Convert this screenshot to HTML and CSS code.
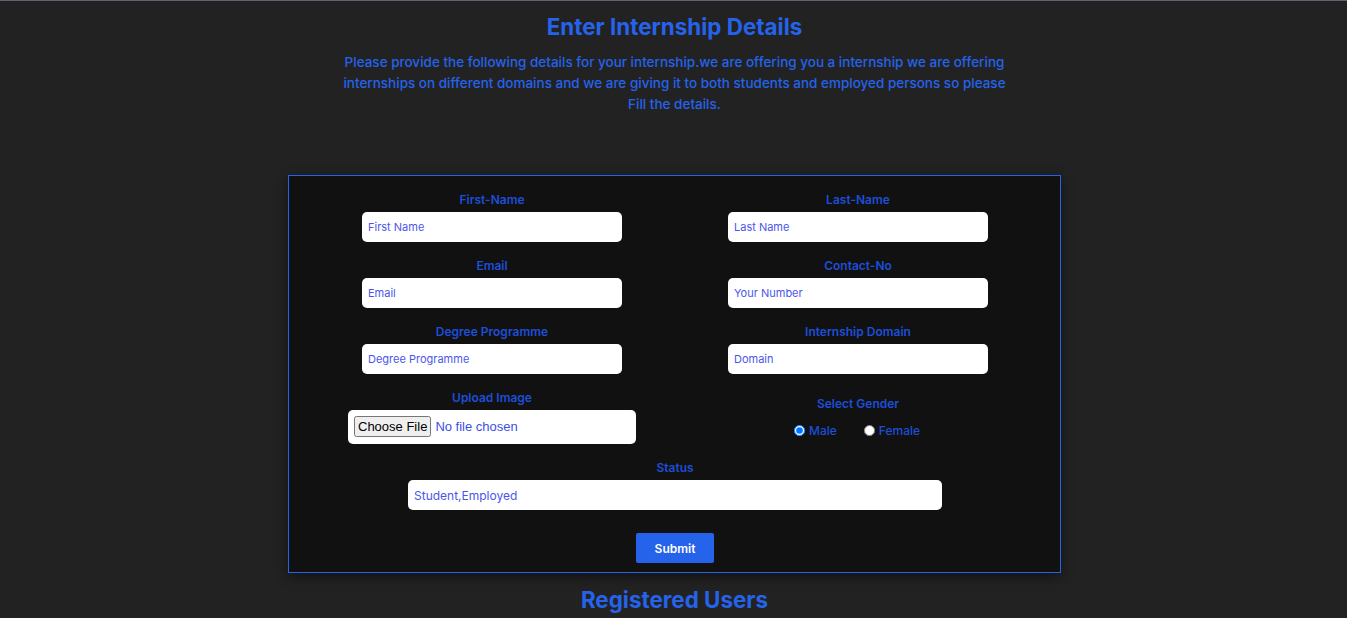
FILE: index.html
```html
<!DOCTYPE html>
<html lang="en">
<head>
<meta charset="utf-8">
<title>Internship Details</title>
<link rel="stylesheet" href="styles.css">
</head>
<body>
<div class="page">
  <header class="intro">
    <h1 class="title">Enter Internship Details</h1>
    <p class="lead">Please provide the following details for your internship.we are offering you a internship we are offering internships on different domains and we are giving it to both students and employed persons so please Fill the details.</p>
  </header>

  <form class="card">
    <div class="grid">
      <div class="field">
        <label class="label">First-Name</label>
        <input class="text" type="text" placeholder="First Name">
      </div>
      <div class="field">
        <label class="label">Last-Name</label>
        <input class="text" type="text" placeholder="Last Name">
      </div>
      <div class="field">
        <label class="label">Email</label>
        <input class="text" type="text" placeholder="Email">
      </div>
      <div class="field">
        <label class="label">Contact-No</label>
        <input class="text" type="text" placeholder="Your Number">
      </div>
      <div class="field">
        <label class="label">Degree Programme</label>
        <input class="text" type="text" placeholder="Degree Programme">
      </div>
      <div class="field">
        <label class="label">Internship Domain</label>
        <input class="text" type="text" placeholder="Domain">
      </div>
      <div class="field">
        <label class="label">Upload Image</label>
        <input class="file" type="file">
      </div>
      <div class="field">
        <label class="label gender-label">Select Gender</label>
        <div class="radios">
          <label class="radio"><input type="radio" name="g" checked> Male</label>
          <label class="radio"><input type="radio" name="g"> Female</label>
        </div>
      </div>
      <div class="field span">
        <label class="label">Status</label>
        <input class="text wide" type="text" placeholder="Student,Employed">
      </div>
      <div class="actions span">
        <button class="submit" type="button">Submit</button>
      </div>
    </div>
  </form>

  <h2 class="subtitle">Registered Users</h2>
</div>
</body>
</html>
```

FILE: styles.css
```css
* { box-sizing: border-box; }
html, body {
  margin: 0;
  padding: 0;
  background: #222222;
  font-family: Inter, "Noto Sans", sans-serif;
  color: #2563eb;
}
body {
  border-top: 1px solid #5c6370;
  min-height: 618px;
}
.page {
  display: flex;
  flex-direction: column;
  align-items: center;
  padding-left: 2px;
}
.intro {
  text-align: center;
  padding-top: 10px;
}
.title {
  margin: 0;
  font-size: 22.4px;
  line-height: 32px;
  font-weight: 700;
  color: #2563eb;
}
.lead {
  margin: 9px auto 0;
  width: 672px;
  font-size: 13.5px;
  line-height: 21px;
  font-weight: 500;
  color: #2563eb;
}
.card {
  margin-top: 60px;
  width: 773px;
  background: #111111;
  border: 1px solid #2563eb;
  box-shadow: 0 4px 12px rgba(0,0,0,0.45);
  padding: 14px 0 9px;
}
.grid {
  display: grid;
  grid-template-columns: 366px 366px;
  column-gap: 0;
  row-gap: 14px;
  padding-left: 20px;
  align-items: center;
}
.span { grid-column: 1 / span 2; }
.field {
  display: flex;
  flex-direction: column;
  align-items: center;
}
.label {
  font-size: 12px;
  line-height: 20px;
  font-weight: 600;
  color: #1d4ed8;
  margin-bottom: 2px;
}
.text {
  width: 260px;
  height: 30px;
  border: none;
  border-radius: 5px;
  background: #ffffff;
  padding: 0 6px;
  font-family: Inter, "Noto Sans", sans-serif;
  font-size: 11px;
  color: #3b4fe6;
  outline: none;
}
.text::placeholder { color: #4a56ea; opacity: 1; }
.file {
  width: 288px;
  height: 34px;
  background: #ffffff;
  border-radius: 5px;
  padding: 6px 6px;
  font-family: "Liberation Sans", Arial, sans-serif;
  font-size: 13px;
  color: #3b4fe6;
}
.file::file-selector-button {
  font-family: "Liberation Sans", Arial, sans-serif;
  font-size: 13px;
  padding: 1px 2px;
  margin-right: 4px;
  height: 21px;
}
.gender-label { margin-bottom: 8px; }
.radios {
  display: flex;
  gap: 27px;
  height: 17px;
  margin-left: -2px;
}
.radio {
  display: flex;
  align-items: center;
  gap: 4px;
  font-size: 12px;
  line-height: 17px;
  font-weight: 500;
  color: #1d4ed8;
}
.radio input {
  margin: 0;
  width: 11px;
  height: 11px;
}
.wide { width: 534px; font-size: 12px; }
.actions {
  display: flex;
  justify-content: center;
  margin-top: 9px;
}
.submit {
  width: 78px;
  height: 30px;
  border: none;
  border-radius: 2px;
  background: #2563eb;
  color: #ffffff;
  font-family: Inter, "Noto Sans", sans-serif;
  font-size: 12px;
  font-weight: 600;
}
.subtitle {
  margin: 12px 0 0;
  font-size: 22.4px;
  line-height: 30px;
  font-weight: 700;
  color: #2563eb;
}
```
